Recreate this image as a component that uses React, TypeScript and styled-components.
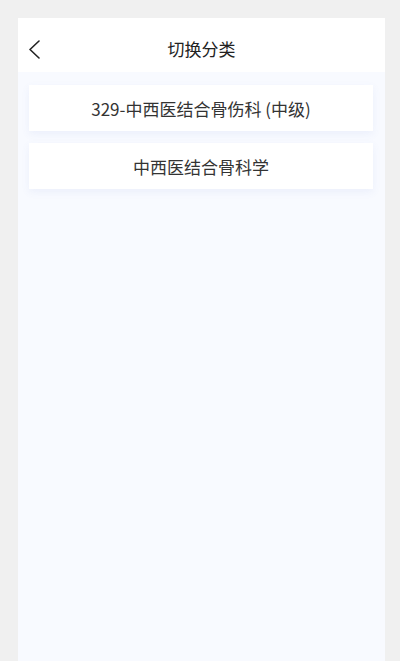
import React from "react";
import styled, { createGlobalStyle } from "styled-components";

const Global = createGlobalStyle`
  html, body { margin: 0; padding: 0; background: #f0f0f0; }
  body { font-family: "Noto Sans CJK SC", "Noto Sans", sans-serif; }
`;

const Frame = styled.div`
  width: 400px;
  height: 661px;
  box-sizing: border-box;
  padding: 18px 15px 0 18px;
  background: #f0f0f0;
  display: flex;
  overflow: hidden;
`;

const Panel = styled.div`
  flex: 1;
  display: flex;
  flex-direction: column;
  background: #f8faff;
`;

const Header = styled.div`
  height: 54px;
  box-sizing: border-box;
  padding-top: 6px;
  flex: none;
  background: #ffffff;
  display: flex;
  align-items: center;
  justify-content: center;
  position: relative;
`;

const Back = styled.button`
  position: absolute;
  left: 9px;
  top: 22px;
  border: none;
  background: none;
  padding: 0;
  width: 13px;
  height: 19px;
  display: flex;
  align-items: center;
  justify-content: center;
`;

const Title = styled.div`
  font-size: 17px;
  color: #222;
  line-height: 1;
`;

const List = styled.div`
  display: flex;
  flex-direction: column;
  gap: 12px;
  padding: 13px 12px 0 11px;
`;

const Card = styled.div`
  height: 46px;
  background: #ffffff;
  display: flex;
  align-items: center;
  justify-content: center;
  font-size: 17px;
  color: #333;
  box-shadow: 0 3px 8px rgba(90, 120, 200, 0.08);
`;

export default function App() {
  return (
    <>
      <Global />
      <Frame>
        <Panel>
          <Header>
            <Back aria-label="back">
              <svg width="12" height="19" viewBox="0 0 12 19" fill="none">
                <path d="M11 1 L2 9.5 L11 18" stroke="#222" strokeWidth="1.6" strokeLinecap="round" strokeLinejoin="round" />
              </svg>
            </Back>
            <Title>切换分类</Title>
          </Header>
          <List>
            <Card>329-中西医结合骨伤科 (中级)</Card>
            <Card>中西医结合骨科学</Card>
          </List>
        </Panel>
      </Frame>
    </>
  );
}
